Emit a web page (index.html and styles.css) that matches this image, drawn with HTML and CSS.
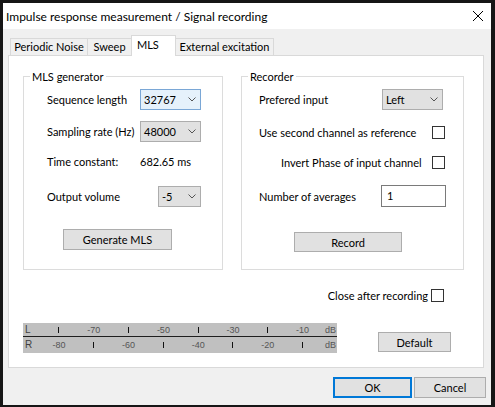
FILE: index.html
```html
<!DOCTYPE html>
<html lang="en">
<head>
  <meta charset="utf-8">
  <title>Impulse response measurement / Signal recording</title>
  <link rel="stylesheet" href="styles.css">
</head>
<body>

  <div class="window">
    <div class="titlebar">
      <span class="title">Impulse response measurement / Signal recording</span>
      <svg class="close" width="10" height="10" viewBox="0 0 10 10"><path d="M0 0L10 10M10 0L0 10" stroke="#000" stroke-width="1"/></svg>
    </div>

    <div class="client">
      <div class="tabs">
        <div class="tab tab-noise">Periodic Noise</div>
        <div class="tab tab-sweep">Sweep</div>
        <div class="tab tab-mls active">MLS</div>
        <div class="tab tab-ext">External excitation</div>
      </div>

      <div class="panel">
        <div class="groups">
          <!-- MLS generator -->
          <fieldset class="group mls">
            <legend>MLS generator</legend>
            <div class="row row-seq">
              <span class="lbl">Sequence length</span>
              <div class="combo focus"><span>32767</span><svg width="8" height="5" viewBox="0 0 8 5"><path d="M0.5 0.5L4 4L7.5 0.5" fill="none" stroke="#555"/></svg></div>
            </div>
            <div class="row row-rate">
              <span class="lbl">Sampling rate (Hz)</span>
              <div class="combo"><span>48000</span><svg width="8" height="5" viewBox="0 0 8 5"><path d="M0.5 0.5L4 4L7.5 0.5" fill="none" stroke="#555"/></svg></div>
            </div>
            <div class="row row-time">
              <span class="lbl">Time constant:</span>
              <span class="value">682.65 ms</span>
            </div>
            <div class="row row-vol">
              <span class="lbl lbl-vol">Output volume</span>
              <div class="combo small"><span>-5</span><svg width="8" height="5" viewBox="0 0 8 5"><path d="M0.5 0.5L4 4L7.5 0.5" fill="none" stroke="#555"/></svg></div>
            </div>
            <button class="btn btn-generate">Generate MLS</button>
          </fieldset>

          <!-- Recorder -->
          <fieldset class="group rec">
            <legend>Recorder</legend>
            <div class="row row-input">
              <span class="lbl lbl-input">Prefered input</span>
              <div class="combo"><span>Left</span><svg width="8" height="5" viewBox="0 0 8 5"><path d="M0.5 0.5L4 4L7.5 0.5" fill="none" stroke="#555"/></svg></div>
            </div>
            <div class="row row-ref">
              <span class="lbl lbl-check">Use second channel as reference</span>
              <span class="check"></span>
            </div>
            <div class="row row-phase">
              <span class="lbl lbl-phase">Invert Phase of input channel</span>
              <span class="check"></span>
            </div>
            <div class="row row-avg">
              <span class="lbl lbl-avg">Number of averages</span>
              <div class="textbox">1</div>
            </div>
            <button class="btn btn-record">Record</button>
          </fieldset>
        </div>

        <div class="close-row">
          <span>Close after recording</span>
          <span class="check"></span>
        </div>

        <div class="bottom-row">
          <div class="meter">
            <div class="meter-line top">
              <span class="ch">L</span>
              <span class="cell"><i class="tick"></i></span>
              <span class="cell">-70</span>
              <span class="cell"><i class="tick"></i></span>
              <span class="cell">-50</span>
              <span class="cell"><i class="tick"></i></span>
              <span class="cell">-30</span>
              <span class="cell"><i class="tick"></i></span>
              <span class="cell">-10</span>
              <span class="db">dB</span>
            </div>
            <div class="meter-line">
              <span class="ch">R</span>
              <span class="cell">-80</span>
              <span class="cell"><i class="tick"></i></span>
              <span class="cell">-60</span>
              <span class="cell"><i class="tick"></i></span>
              <span class="cell">-40</span>
              <span class="cell"><i class="tick"></i></span>
              <span class="cell">-20</span>
              <span class="cell"><i class="tick"></i></span>
              <span class="db">dB</span>
            </div>
          </div>
          <button class="btn btn-default">Default</button>
        </div>
      </div>

      <div class="footer">
        <button class="btn btn-ok">OK</button>
        <button class="btn btn-cancel">Cancel</button>
      </div>
    </div>
  </div>

</body>
</html>
```

FILE: styles.css
```css
* {
  box-sizing: border-box;
}

body {
  margin: 0;
  width: 495px;
  height: 407px;
  overflow: hidden;
  background: #161616;
  font-family: Lato, "Noto Sans", sans-serif;
  font-size: 11px;
  color: #000;
  white-space: nowrap;
}

.window {
  margin: 3px 0 0 3px;
  width: 488px;
  height: 402px;
  background: #f0f0f0;
  display: flex;
  flex-direction: column;
}

/* Barre de titre */
.titlebar {
  height: 26px;
  background: #fff;
  display: flex;
  align-items: center;
  justify-content: space-between;
  padding: 0 8px 0 3px;
  font-size: 12px;
}

.client {
  padding: 6px 0 0 5px;
}

/* Onglets */
.tabs {
  display: flex;
  align-items: flex-end;
  height: 20px;
  margin-left: 2px;
}

.tab {
  height: 17px;
  line-height: 16px;
  border: 1px solid #d9d9d9;
  border-bottom: none;
  background: #f0f0f0;
  text-align: center;
  margin-left: -1px;
}

.tab-noise { width: 78px; margin-left: 0; }
.tab-sweep { width: 45px; }
.tab-mls { width: 45px; text-align: left; padding-left: 5px; }
.tab-ext { width: 99px; }

.tab.active {
  height: 21px;
  line-height: 18px;
  background: #fff;
  margin-bottom: -1px;
  position: relative;
  z-index: 1;
}

.panel {
  width: 476px;
  height: 313px;
  background: #fff;
  border: 1px solid #d9d9d9;
  padding: 13px 0 0 14px;
}

.groups {
  display: flex;
  gap: 18px;
}

.group {
  margin: 0;
  padding: 0;
  border: 1px solid #dcdcdc;
  height: 201px;
}

.group legend {
  margin-left: 6px;
  padding: 0 2px;
  line-height: 15px;
}

.mls { width: 200px; }
.rec { width: 223px; }

.row {
  display: flex;
  align-items: center;
  height: 21px;
}

.lbl {
  flex-shrink: 0;
}

.mls .row { padding-left: 23px; }
.mls .lbl { width: 93px; }
.mls .lbl-vol { width: 111px; }

.row-seq { margin-top: 5px; }
.row-rate { margin-top: 11px; }
.row-time { margin-top: 9px; }
.row-vol { margin-top: 14px; }

.rec .row { padding-left: 17px; }
.lbl-input { width: 123px; }
.lbl-check { width: 173px; }
.rec .row-phase { padding-left: 39px; }
.lbl-phase { width: 151px; }
.lbl-avg { width: 122px; }

.row-input { margin-top: 5px; }
.row-ref { margin-top: 12px; }
.row-phase { margin-top: 9px; }
.row-avg { margin-top: 12px; height: 22px; }

/* Listes déroulantes */
.combo {
  flex-shrink: 0;
  width: 61px;
  height: 21px;
  background: #e1e1e1;
  border: 1px solid #adadad;
  display: flex;
  align-items: center;
  justify-content: space-between;
  padding: 0 4px 0 3px;
}

.combo.focus {
  background: #e5f1fb;
  border-color: #7aa7d6;
}

.combo.small {
  width: 43px;
}

.textbox {
  flex-shrink: 0;
  width: 65px;
  height: 22px;
  border: 1px solid #7a7a7a;
  background: #fff;
  padding: 3px 0 0 5px;
}

.check {
  flex-shrink: 0;
  width: 13px;
  height: 13px;
  border: 1px solid #333;
  background: #fff;
}

/* Boutons */
.btn {
  display: block;
  font-family: Lato, "Noto Sans", sans-serif;
  font-size: 11px;
  color: #000;
  background: #e1e1e1;
  border: 1px solid #adadad;
  padding: 0;
  height: 21px;
}

.btn-generate {
  width: 109px;
  margin: 22px 0 0 39px;
}

.btn-record {
  width: 108px;
  height: 20px;
  margin: 25px 0 0 52px;
}

.close-row {
  display: flex;
  justify-content: flex-end;
  align-items: center;
  gap: 3px;
  margin-top: 19px;
  padding-right: 39px;
  height: 13px;
}

.bottom-row {
  display: flex;
  margin-top: 21px;
}

/* Vumètre */
.meter {
  width: 314px;
  height: 30px;
  background: #c0c0c0;
  font-family: "Liberation Sans", Arial, sans-serif;
  font-size: 9px;
  color: #555;
}

.meter-line {
  display: grid;
  grid-template-columns: 17.6px repeat(8, 34.8px) 1fr;
  align-items: center;
  height: 15px;
}

.meter-line.top {
  height: 14px;
  border-bottom: 1px solid #1e1e1e;
}

.meter .ch {
  font-size: 10px;
  color: #404040;
  padding-left: 2px;
}

.meter .cell {
  display: flex;
  justify-content: center;
  padding-left: 2px;
}

.tick {
  width: 1px;
  height: 6px;
  background: #111;
}

.meter .db {
  text-align: right;
  padding-right: 1px;
}

.btn-default {
  width: 73px;
  height: 20px;
  margin: 9px 0 0 41px;
}

.footer {
  display: flex;
  justify-content: flex-end;
  gap: 2px;
  margin-top: 9px;
  padding-right: 5px;
}

.btn-ok {
  width: 79px;
  border: 2px solid #0078d7;
}

.btn-cancel {
  width: 72px;
}
```
